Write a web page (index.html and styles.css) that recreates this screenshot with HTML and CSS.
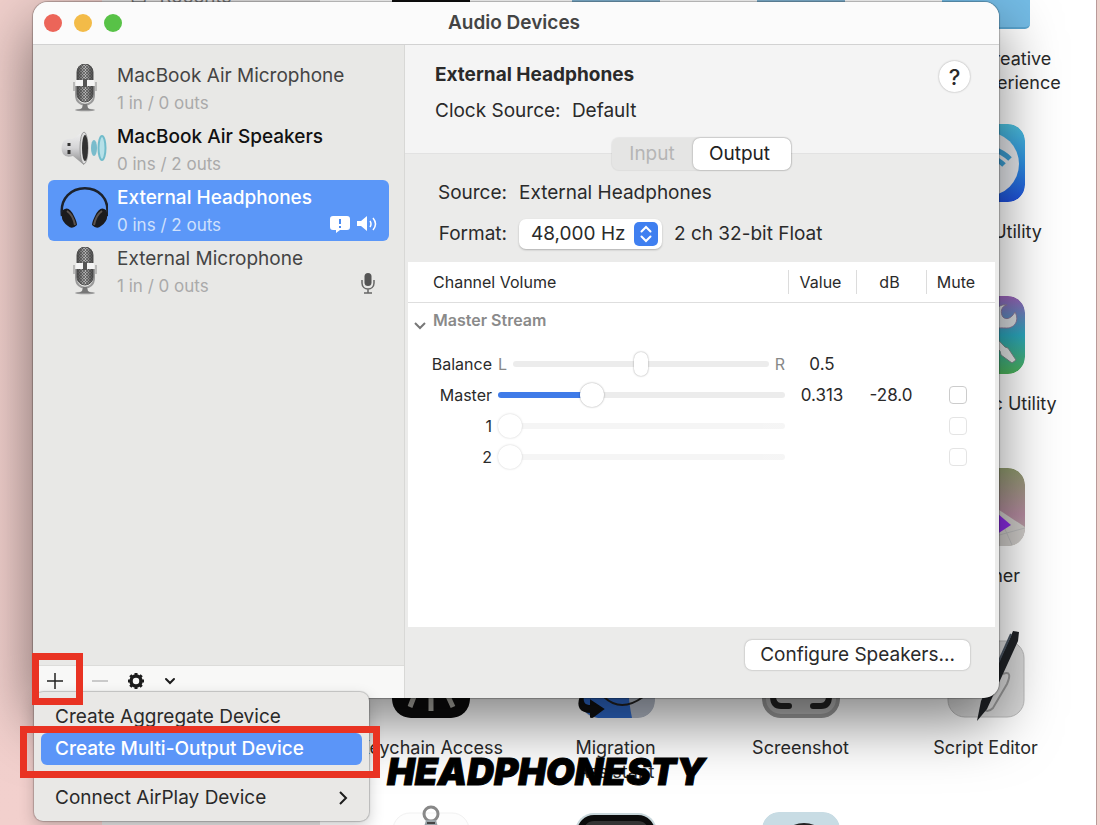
FILE: index.html
```
<!DOCTYPE html>
<html lang="en">

<head>
  <meta charset="UTF-8">
  <meta name="viewport" content="width=device-width, initial-scale=1.0">
  <title>Audio Devices</title>
  <link rel="stylesheet" href="styles.css">
</head>

<body>
  <!-- shared icons -->
  <svg width="0" height="0" class="defs">
    <defs>
      <linearGradient id="metal" x1="0" x2="1" y1="0" y2="0">
        <stop offset="0" stop-color="#444"/>
        <stop offset=".5" stop-color="#bbb"/>
        <stop offset="1" stop-color="#444"/>
      </linearGradient>
      <pattern id="mesh" width="3" height="3" patternUnits="userSpaceOnUse">
        <path d="M0 0l3 3M3 0l-3 3" stroke="#444" stroke-width=".6"/>
      </pattern>
      <symbol id="mic" viewBox="0 0 48 48">
        <ellipse cx="25" cy="46" rx="10" ry="1.300" fill="#999"/>
        <path d="M16 22v9c0 13 18 13 18 0v-9" fill="none" stroke="#999" stroke-width="2"/>
        <path d="M23 40h4l1 4 3 2H19l3-2z" fill="#777"/>
        <rect x="17" y="0" width="16" height="38" rx="8" fill="url(#metal)" stroke="#555"/>
        <rect x="17" y="0" width="16" height="38" rx="8" fill="url(#mesh)"/>
        <path d="M16 16h18v6H16z" fill="#f4f4f4"/>
        <path d="M23 15h4v8h-4z" fill="#555"/>
        <path d="M14 18v9M36 18v9" stroke="#aaa" stroke-width="1.500"/>
      </symbol>
    </defs>
  </svg>

  <div class="desktop">
    <!-- finder window in the back -->
    <div class="finder">
      <div class="finder-side"><span>▢</span>Recents</div>
      <div class="files">
        <div class="file"><div class="app black"></div></div>
        <div class="file"><div class="folder dim"></div></div>
        <div class="file"><div class="folder dim"></div></div>
        <div class="file">
          <div class="folder"></div>
          <p>Adobe Creative<br>Cloud Experience</p>
        </div>
        <div class="file last">
          <svg class="app" viewBox="0 0 78 78">
            <defs><linearGradient id="air" x2="0" y2="1"><stop offset="0" stop-color="#4fc3e0"/><stop offset=".5" stop-color="#2d8fe0"/><stop offset="1" stop-color="#1f50dd"/></linearGradient></defs>
            <rect width="78" height="78" rx="17" fill="url(#air)"/>
            <circle cx="40" cy="40" r="32" fill="#e4e6ea"/>
            <path d="M46 25q10 3 17 10M46 34q6 2 11 7" stroke="#3c9cd0" stroke-width="5" fill="none"/>
          </svg>
          <p>AirPort Utility</p>
        </div>
        <div class="file last">
          <svg class="app" viewBox="0 0 78 78">
            <defs><linearGradient id="sync" x2="0" y2="1"><stop offset="0" stop-color="#9a62b8"/><stop offset=".5" stop-color="#2ba7bd"/><stop offset="1" stop-color="#4db35a"/></linearGradient></defs>
            <rect width="78" height="78" rx="17" fill="url(#sync)"/>
            <path d="M60 9c-6 1-7 8-4 12 3 3 8 2 12-5 5 9-1 17-10 16-4 0-8-1-12 3l-6-8c5-2 3-7 8-13 3-4 8-6 12-5z" fill="#d8dbde" stroke="#879"/>
            <path d="M38 30l20 21 3 1 8 12-4 3-11-8-1-4-20-20z" fill="#e2e4e4" stroke="#788"/>
          </svg>
          <p>ColorSync Utility</p>
        </div>
        <div class="file last">
          <svg class="app" viewBox="0 0 78 78">
            <defs><linearGradient id="graph" x2="0" y2="1"><stop offset="0" stop-color="#8f9a6d"/><stop offset=".6" stop-color="#b58ba0"/><stop offset="1" stop-color="#b8b4a8"/></linearGradient></defs>
            <rect width="78" height="78" rx="17" fill="url(#graph)"/>
            <path d="M40 34l38 25v2q0 17-17 17H40z" fill="#cfccc9"/>
            <path d="M45 69l33-9M53 50l12 27" stroke="#bbb" fill="none"/>
            <path d="M44 40l20 17-20 13z" fill="#8a2be2"/>
          </svg>
          <p>Grapher</p>
        </div>
        <div class="file">
          <svg class="app" viewBox="0 0 78 78">
            <rect width="78" height="78" rx="19" fill="#0c0c0c"/>
            <path d="M23 54l-5 13M39 54v17M55 54l6 13" stroke="#aaa9a2" stroke-width="5"/>
          </svg>
          <p>Keychain Access</p>
        </div>
        <div class="file">
          <svg class="app" viewBox="0 0 78 78">
            <rect x="4" width="74" height="78" rx="17" fill="#b4bbc8"/>
            <path d="M18 0h32q-1 50 5 78H21Q4 74 4 60V17Q4 2 18 0z" fill="#2e68c8"/>
            <path d="M27 57q17 16 39 0" fill="none" stroke="#222" stroke-width="2"/>
            <path d="M6 56q-2 10 8 10v-5l12 8-12 9v-6Q-2 72 4 56z" fill="#111" stroke="#111" stroke-width="2"/>
          </svg>
          <p>Migration<br>Assistant</p>
        </div>
        <div class="file">
          <svg class="app" viewBox="0 0 78 78">
            <rect x="2" y="2" width="74" height="74" rx="17" fill="#b3b3b3" stroke="#999" stroke-width="4"/>
            <path d="M11 56q0 10 8 10h8M67 56q0 10-8 10h-8" stroke="#222" stroke-width="6" fill="none" stroke-linecap="round"/>
          </svg>
          <p>Screenshot</p>
        </div>
        <div class="file">
          <svg class="app pen" viewBox="0 0 78 78">
            <rect x="1" y="1" width="76" height="76" rx="17" fill="#d9d9d9" stroke="#bbb"/>
            <path d="M56 34q10-4 4 10L46 68q-6 6-11 0" fill="none" stroke="#999" stroke-width="2"/>
            <path d="M30 81l4-20L63-2l3-7 6 1-1 9-31 68z" fill="#202327"/>
            <path d="M64-6L47 32" stroke="#4a5562" stroke-width="2"/>
          </svg>
          <p>Script Editor</p>
        </div>
        <div class="file">
          <svg class="app pen" viewBox="0 0 78 78">
            <rect x="1" y="1" width="76" height="76" rx="17" fill="#fdfdfd" stroke="#f1f1f1"/>
            <circle cx="39" cy="2" r="7" fill="none" stroke="#888" stroke-width="3"/>
            <path d="M34 8h10l4 14H30z" fill="#9aa3a8"/>
            <path d="M35 11h8" stroke="#444" stroke-width="2"/>
          </svg>
        </div>
        <div class="file"><div class="app terminal"></div></div>
        <div class="file">
          <svg class="app" viewBox="0 0 78 78">
            <rect width="78" height="78" rx="17" fill="#c8dce4"/>
            <circle cx="42" cy="38" r="27" fill="#222"/>
          </svg>
        </div>
      </div>
    </div>

    <!-- audio devices window -->
    <div class="window">
      <div class="titlebar">
        <div class="lights">
          <button class="red" aria-label="Close"></button>
          <button class="yellow" aria-label="Minimize"></button>
          <button class="green" aria-label="Zoom"></button>
        </div>
        <h1>Audio Devices</h1>
      </div>
      <div class="main">
        <div class="side">
          <ul class="devices">
            <li class="grey">
              <svg class="pic"><use href="#mic"/></svg>
              <div><b>MacBook Air Microphone</b><small>1 in / 0 outs</small></div>
            </li>
            <li>
              <svg class="pic" viewBox="0 0 48 48">
                <defs><linearGradient id="cone" x2="0" y2="1"><stop offset="0" stop-color="#f2f2f2"/><stop offset=".5" stop-color="#d4d4d6"/><stop offset="1" stop-color="#888"/></linearGradient></defs>
                <path d="M3 17q3-4 9-3L24 6v34L13 31q-7 2-10-2-3-6 0-12z" fill="url(#cone)"/>
                <ellipse cx="24" cy="23" rx="4" ry="16" fill="#ddd" stroke="#999"/>
                <ellipse cx="25" cy="23" rx="3" ry="13" fill="#333"/>
                <path d="M9 18v3M9 25v4" stroke="#333" stroke-width="3"/>
                <ellipse cx="34" cy="23" rx="3" ry="8" fill="#79bccc"/>
                <ellipse cx="42" cy="23" rx="3.500" ry="12" fill="#b6e0e8" stroke="#72bccb" stroke-width="2"/>
              </svg>
              <div><b>MacBook Air Speakers</b><small>0 ins / 2 outs</small></div>
            </li>
            <li class="active">
              <svg class="pic" viewBox="0 0 48 48">
                <path d="M2 30C-3-7 53-7 47 30" fill="none" stroke="#1c222c" stroke-width="2.500"/>
                <path d="M3 24q6-5 11 6 3 6 3 9-5 5-9 1Q-1 34 3 24zM46 24q-6-5-11 6-3 6-3 9 5 5 9 1 9-6 5-16z" fill="#1b1b1d"/>
                <path d="M7 25q6 4 8 14M42 25q-6 4-8 14" fill="none" stroke="#5c5450" stroke-width="2"/>
              </svg>
              <div><b>External Headphones</b><small>0 ins / 2 outs</small></div>
              <span class="marks">
                <svg width="20" height="18" viewBox="0 0 20 18"><path d="M3 1h14q3 0 3 3v8q0 3-3 3h-7l-4 3v-3H3q-3 0-3-3V4q0-3 3-3z" fill="#fff"/><path d="M10 4v5M10 11v2" stroke="#4a8af0" stroke-width="2"/></svg>
                <svg width="20" height="18" viewBox="0 0 20 18"><path d="M0 6h4l6-5v15l-6-5H0z" fill="#fff"/><path d="M13 6q2 3 0 6M16 3q5 6 0 12" fill="none" stroke="#fff" stroke-width="1.500"/></svg>
              </span>
            </li>
            <li class="grey">
              <svg class="pic"><use href="#mic"/></svg>
              <div><b>External Microphone</b><small>1 in / 0 outs</small></div>
              <span class="marks mark-mic">
                <svg width="14" height="21" viewBox="0 0 14 21"><rect x="3.500" width="7" height="13" rx="3.500" fill="#555"/><path d="M1 7v3c0 8 12 8 12 0V7M7 16v4M3 20h8" fill="none" stroke="#666" stroke-width="1.500"/></svg>
              </span>
            </li>
          </ul>
          <div class="toolbar">
            <button aria-label="Add"><svg width="16" height="16" viewBox="0 0 16 16"><path d="M8 0v16M0 8h16" stroke="#222" stroke-width="1.500"/></svg></button>
            <button aria-label="Remove" disabled><svg width="16" height="16" viewBox="0 0 16 16"><path d="M0 8h16" stroke="#bbb" stroke-width="1.500"/></svg></button>
            <button aria-label="Settings"><svg width="18" height="18" viewBox="0 0 18 18"><circle cx="9" cy="9" r="5" fill="none" stroke="#1c1c1c" stroke-width="3.500"/><path d="M9 1v3M9 14v3M1 9h3M14 9h3M3.300 3.300l2 2M12.700 12.700l2 2M3.300 14.700l2-2M12.700 5.300l2-2" stroke="#1c1c1c" stroke-width="3"/></svg></button>
            <button aria-label="More"><svg width="12" height="8" viewBox="0 0 12 8"><path d="M2 2l4 4 4-4" fill="none" stroke="#1c1c1c" stroke-width="2" stroke-linecap="round"/></svg></button>
            <div class="menu">
              <button>Create Aggregate Device</button>
              <button class="hover">Create Multi-Output Device</button>
              <hr>
              <button>Connect AirPlay Device
                <svg width="10" height="14" viewBox="0 0 10 14"><path d="M2 1l6 6-6 6" fill="none" stroke="#1c1c1c" stroke-width="2"/></svg>
              </button>
            </div>
            <div class="mark-box mark-add"></div>
            <div class="mark-box mark-item"></div>
          </div>
        </div>

        <div class="detail">
          <div class="head">
            <div>
              <h2>External Headphones</h2>
              <p>Clock Source: <span>Default</span></p>
            </div>
            <button class="help" aria-label="Help">?</button>
          </div>
          <div class="tabs">
            <button disabled>Input</button>
            <button class="on">Output</button>
          </div>
          <div class="form">
            <span class="lab">Source:</span>
            <span>External Headphones</span>
            <label class="lab" for="rate">Format:</label>
            <div class="format">
              <div class="select">
                <select id="rate"><option>48,000 Hz</option></select>
                <svg width="24" height="24" viewBox="0 0 24 24"><rect width="24" height="24" rx="5" fill="#3f7ff0"/><path d="M7.500 9.500L12 5l4.500 4.500M7.500 14.500L12 19l4.500-4.500" fill="none" stroke="#fff" stroke-width="2" stroke-linecap="round"/></svg>
              </div>
              <span>2 ch 32-bit Float</span>
            </div>
          </div>
          <div class="table-box">
            <table>
              <colgroup><col><col class="c-value"><col class="c-db"><col class="c-mute"></colgroup>
              <thead>
                <tr>
                  <th class="first">Channel Volume</th>
                  <th><span>Value</span></th>
                  <th><span>dB</span></th>
                  <th><span class="mute">Mute</span></th>
                </tr>
              </thead>
              <tbody>
                <tr class="stream">
                  <td colspan="4">
                    <svg width="14" height="9" viewBox="0 0 14 9"><path d="M2 2l5 5 5-5" fill="none" stroke="#777" stroke-width="2"/></svg>Master Stream
                  </td>
                </tr>
                <tr>
                  <td>
                    <div class="chan">
                      <label for="bal">Balance</label><i>L</i>
                      <input type="range" id="bal" class="balance" min="0" max="1" step="0.001" value="0.5"><i>R</i>
                    </div>
                  </td>
                  <td>0.5</td>
                  <td></td>
                  <td></td>
                </tr>
                <tr>
                  <td>
                    <div class="chan">
                      <label for="vol">Master</label>
                      <input type="range" id="vol" min="0" max="1" step="0.001" value="0.313" style="--fill: 31.3%">
                    </div>
                  </td>
                  <td>0.313</td>
                  <td>-28.0</td>
                  <td><input type="checkbox" aria-label="Mute master"></td>
                </tr>
                <tr>
                  <td>
                    <div class="chan">
                      <label for="ch1">1</label>
                      <input type="range" id="ch1" min="0" max="1" value="0" disabled>
                    </div>
                  </td>
                  <td></td>
                  <td></td>
                  <td><input type="checkbox" aria-label="Mute channel 1" disabled></td>
                </tr>
                <tr>
                  <td>
                    <div class="chan">
                      <label for="ch2">2</label>
                      <input type="range" id="ch2" min="0" max="1" value="0" disabled>
                    </div>
                  </td>
                  <td></td>
                  <td></td>
                  <td><input type="checkbox" aria-label="Mute channel 2" disabled></td>
                </tr>
              </tbody>
            </table>
          </div>
          <div class="foot"><button>Configure Speakers...</button></div>
        </div>
      </div>
    </div>

    <div class="watermark">HEADPHONESTY</div>
  </div>
</body>

</html>
```
FILE: styles.css
```
* {
  box-sizing: border-box;
}

body {
  margin: 0;
  font-family: Inter, "Liberation Sans", sans-serif;
  font-size: 19px;
  line-height: 24px;
  color: #2a2a2a;
}

h1, h2, p, ul {
  margin: 0;
  padding: 0;
}

button, select, input {
  font: inherit;
  color: inherit;
  margin: 0;
}

button {
  border: 0;
  padding: 0;
  background: none;
}

svg {
  display: block;
}

.defs {
  position: absolute;
}

.desktop {
  position: relative;
  height: 100vh;
  overflow: hidden;
  background: linear-gradient(#efcfcb, #f2d0cd);
}

/* finder */
.finder {
  position: absolute;
  top: 0;
  bottom: 0;
  left: 102px;
  right: 3px;
  display: flex;
  overflow: hidden;
  background: #fff;
  border-right: 1px solid #b99a99;
}

.finder-side {
  width: 218px;
  margin-top: -15px;
  padding-left: 28px;
  background: #e4e3e3;
  color: #777;
}

.finder-side span {
  margin-right: 12px;
}

.files {
  display: grid;
  grid-template-columns: repeat(4, 185px);
  grid-auto-rows: 172px;
  margin: -48px 0 0 18px;
}

.file {
  display: flex;
  flex-direction: column;
  align-items: center;
  text-align: center;
  font-size: 18px;
}

.file p {
  margin-top: 18px;
}

.file.last {
  grid-column: 4;
}

.app {
  width: 78px;
  height: 78px;
  border-radius: 17px;
}

.pen {
  overflow: visible;
}

.black {
  background: #111;
}

.terminal {
  margin-top: 3px;
  background: #333;
  border: 6px solid #0c0c0c;
  box-shadow: 0 0 0 2px #c9d8dc;
}

.folder {
  width: 88px;
  height: 77px;
  border-radius: 5px;
  background: #74bce6;
  border-bottom: 2px solid #5aa5d0;
}

.dim {
  background: #7fb1d0;
}

/* audio window */
.window {
  position: absolute;
  top: 2px;
  bottom: 127px;
  left: 33px;
  right: 101px;
  display: flex;
  flex-direction: column;
  border-radius: 15px;
  background: #ebebea;
  box-shadow: 0 0 1px 1px rgba(0, 0, 0, .25), 0 24px 60px rgba(0, 0, 0, .5);
}

.titlebar {
  display: flex;
  align-items: center;
  height: 43px;
  padding: 0 11px;
  border-radius: 15px 15px 0 0;
  background: #fbfbfb;
  border-bottom: 1px solid #d2d2d2;
}

.lights {
  display: flex;
  gap: 12px;
  width: 90px;
}

.lights button {
  width: 18px;
  height: 18px;
  border-radius: 50%;
}

.red {
  background: #ec6559;
}

.yellow {
  background: #f3bb48;
}

.green {
  background: #58c247;
}

.titlebar h1 {
  flex: 1;
  margin-right: 94px;
  text-align: center;
  font-size: 19px;
  font-weight: 600;
  color: #444;
}

.main {
  display: flex;
  flex: 1;
  min-height: 0;
}

.side {
  display: flex;
  flex-direction: column;
  width: 372px;
  border-right: 1px solid #d8d8d6;
  border-bottom-left-radius: 15px;
  background: #e8e8e6;
}

.devices {
  flex: 1;
  padding: 13px 15px;
  list-style: none;
}

.devices li {
  display: flex;
  gap: 9px;
  height: 61px;
  padding: 6px 12px 8px;
  border-radius: 6px;
}

.devices b {
  display: block;
  margin-bottom: 3px;
  font-weight: 500;
  color: #111;
}

.devices small {
  display: block;
  font-size: 17px;
  color: #aaa;
}

.devices .grey b {
  font-weight: 400;
  color: #444;
}

.devices .active {
  background: #5b97f8;
}

.devices .active b {
  color: #fff;
}

.devices .active small {
  color: #cfe0fc;
}

.pic {
  width: 48px;
  height: 48px;
}

.marks {
  display: flex;
  gap: 7px;
  align-self: flex-end;
  margin-left: auto;
}

.mark-mic {
  padding-right: 2px;
}

.toolbar {
  position: relative;
  display: flex;
  align-items: center;
  height: 33px;
  padding: 0 14px 3px;
  border-top: 1px solid #dcdcda;
  border-bottom-left-radius: 15px;
  background: #f8f8f7;
}

.toolbar > button {
  display: flex;
  margin-right: 19px;
}

.toolbar > button:first-child {
  margin-right: 29px;
}

.menu {
  position: absolute;
  top: 26px;
  left: 1px;
  width: 335px;
  padding: 9px 7px 7px;
  border-radius: 9px;
  background: #e9e8e6;
  box-shadow: 0 0 1px 1px rgba(0, 0, 0, .2), 0 6px 16px rgba(0, 0, 0, .2);
}

.menu button {
  display: flex;
  align-items: center;
  justify-content: space-between;
  width: 100%;
  height: 32px;
  padding: 0 14px;
  border-radius: 6px;
}

.menu .hover {
  background: #5b95f8;
  color: #fff;
  font-weight: 500;
}

.menu hr {
  height: 1px;
  margin: 8px 14px;
  border: 0;
  background: #e2e1df;
}

/* red highlights */
.mark-box {
  position: absolute;
  border: 7px solid #e93323;
  pointer-events: none;
}

.mark-add {
  top: -13px;
  left: -1px;
  width: 51px;
  height: 52px;
}

.mark-item {
  top: 60px;
  left: -13px;
  width: 360px;
  height: 52px;
}

/* right part */
.detail {
  display: flex;
  flex-direction: column;
  flex: 1;
  min-width: 0;
}

.head {
  display: flex;
  justify-content: space-between;
  height: 109px;
  padding: 16px 29px 0 30px;
  border-bottom: 1px solid #e2e2e2;
  background: #f4f4f4;
}

.head h2 {
  margin: 2px 0 12px;
  font-size: 19px;
  font-weight: 700;
}

.head span {
  margin-left: 6px;
}

.help {
  width: 31px;
  height: 31px;
  border-radius: 50%;
  background: #fff;
  box-shadow: 0 0 2px rgba(0, 0, 0, .35);
  font-size: 22px;
  font-weight: 500;
}

.tabs {
  display: flex;
  align-self: center;
  margin-top: -16px;
  margin-right: 2px;
  border-radius: 7px;
  background: #e5e5e4;
  box-shadow: 0 0 1px 1px rgba(0, 0, 0, .06);
}

.tabs button {
  width: 81px;
  height: 32px;
  color: #b5b5b5;
}

.tabs .on {
  width: 98px;
  padding-right: 4px;
  border-radius: 7px;
  background: #fff;
  box-shadow: 0 0 2px rgba(0, 0, 0, .4);
  color: #222;
}

.form {
  display: grid;
  grid-template-columns: 102px 1fr;
  column-gap: 12px;
  align-items: center;
  padding: 11px 0 13px;
}

.form > * {
  min-height: 26px;
}

.lab {
  text-align: right;
}

.format {
  display: flex;
  align-items: center;
  gap: 12px;
  padding-top: 12px;
}

label.lab {
  padding-top: 12px;
}

.select {
  position: relative;
  width: 143px;
}

.select select {
  width: 100%;
  height: 30px;
  padding: 0 12px;
  appearance: none;
  border: 0;
  border-radius: 7px;
  background: #fff;
  box-shadow: 0 1px 2px rgba(0, 0, 0, .25);
}

.select svg {
  position: absolute;
  top: 3px;
  right: 4px;
  pointer-events: none;
}

.table-box {
  flex: 1;
  margin: 0 4px 0 3px;
  background: #fff;
}

table {
  width: 100%;
  table-layout: fixed;
  border-collapse: collapse;
  font-size: 17px;
}

.c-value {
  width: 68px;
}

.c-db {
  width: 70px;
}

.c-mute {
  width: 69px;
}

th, td {
  height: 31px;
  padding: 0;
  text-align: center;
  font-weight: 400;
}

th {
  height: 40px;
  font-size: 16px;
  border-bottom: 1px solid #dedede;
}

th span {
  display: block;
  padding-right: 4px;
  border-left: 1px solid #dcdcdc;
}

th .mute {
  padding-right: 10px;
}

th.first {
  padding-left: 25px;
  text-align: left;
}

.stream td {
  height: 46px;
  padding: 5px 0 0 25px;
  position: relative;
  text-align: left;
  vertical-align: top;
  font-size: 16px;
  font-weight: 600;
  color: #8a8a8a;
}

.stream svg {
  position: absolute;
  top: 18px;
  left: 5px;
}

.chan {
  display: flex;
  align-items: center;
  gap: 6px;
  padding-right: 3px;
  font-size: 16px;
}

.chan label {
  width: 84px;
  text-align: right;
}

.chan i {
  font-style: normal;
  color: #888;
}

input[type=range] {
  flex: 1;
  min-width: 0;
  height: 26px;
  appearance: none;
  background: none;
}

input[type=range]::-webkit-slider-runnable-track {
  height: 6px;
  border-radius: 3px;
  background: linear-gradient(to right, #3f7be8 var(--fill, 0%), #ececec var(--fill, 0%));
}

input[type=range]::-webkit-slider-thumb {
  appearance: none;
  width: 24px;
  height: 24px;
  margin-top: -9px;
  border-radius: 12px;
  background: #fff;
  box-shadow: 0 0 2px rgba(0, 0, 0, .4);
}

input[type=range].balance::-webkit-slider-thumb {
  width: 14px;
  border-radius: 7px;
}

input[type=range]:disabled {
  opacity: .5;
}

input[type=checkbox] {
  display: block;
  width: 18px;
  height: 18px;
  margin: 0 auto 0 23px;
  appearance: none;
  border: 1px solid #ccc;
  border-radius: 4px;
  background: #fff;
}

input[type=checkbox]:disabled {
  border-color: #e4e4e4;
}

.foot {
  height: 71px;
  padding: 13px 29px;
  text-align: right;
}

.foot button {
  width: 225px;
  height: 30px;
  border-radius: 7px;
  background: #fff;
  box-shadow: 0 0 2px rgba(0, 0, 0, .35);
}

.watermark {
  position: absolute;
  left: 387px;
  bottom: 33px;
  font-size: 37px;
  line-height: 40px;
  font-weight: 900;
  font-style: italic;
  color: #000;
  -webkit-text-stroke: 1px #000;
}
```
